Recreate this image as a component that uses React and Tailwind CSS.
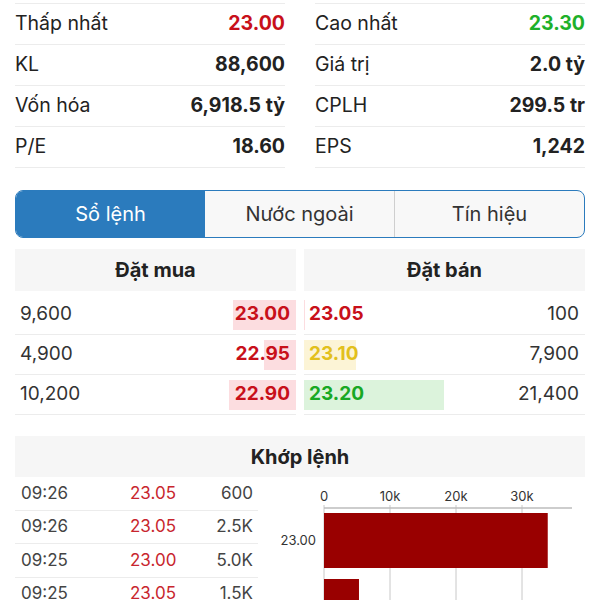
const STATS = [
  [["Thấp nhất", "23.00", "text-[#c8101a]"], ["Cao nhất", "23.30", "text-[#1eb02a]"]],
  [["KL", "88,600", ""], ["Giá trị", "2.0 tỷ", ""]],
  [["Vốn hóa", "6,918.5 tỷ", ""], ["CPLH", "299.5 tr", ""]],
  [["P/E", "18.60", ""], ["EPS", "1,242", ""]],
];

const BUY = [
  { qty: "9,600", vol: 9600, price: "23.00" },
  { qty: "4,900", vol: 4900, price: "22.95" },
  { qty: "10,200", vol: 10200, price: "22.90" },
];

const SELL = [
  { price: "23.05", vol: 100, qty: "100", text: "text-[#c8101a]", bg: "bg-[#fcdde0]" },
  { price: "23.10", vol: 7900, qty: "7,900", text: "text-[#e2c01c]", bg: "bg-[#fcf4d6]" },
  { price: "23.20", vol: 21400, qty: "21,400", text: "text-[#18a824]", bg: "bg-[#dcf3dc]" },
];

const TRADES = [
  ["09:26", "23.05", "600"],
  ["09:26", "23.05", "2.5K"],
  ["09:25", "23.00", "5.0K"],
  ["09:25", "23.05", "1.5K"],
];

const MAXVOL = 21400;
const BARW = 140;

function StatColumn({ col }) {
  return (
    <div className="flex flex-col border-t border-[#ececec]">
      {STATS.map((row) => {
        const [label, value, color] = row[col];
        return (
          <div key={label} className="flex h-[41px] items-center justify-between border-b border-[#ececec]">
            <span className="text-[19.5px] text-[#222]">{label}</span>
            <span className={`text-[19.5px] font-bold ${color || "text-[#222]"}`}>{value}</span>
          </div>
        );
      })}
    </div>
  );
}

function Chart() {
  const x0 = 66, perK = 6.6;
  const ticks = [0, 10, 20, 30];
  return (
    <svg width="327" height="130" viewBox="0 0 327 130" className="block">
      {ticks.map((t) => (
        <g key={t}>
          <text x={x0 + t * perK} y="24" textAnchor="middle" fontSize="13" fill="#333"
            fontFamily="Inter, sans-serif">{t === 0 ? "0" : `${t}k`}</text>
          <line x1={x0 + t * perK} x2={x0 + t * perK} y1="28" y2="130" stroke="#c8c8c8" strokeWidth="1" />
        </g>
      ))}
      <line x1={x0} x2="314" y1="31" y2="31" stroke="#bdbdbd" strokeWidth="1.5" />
      <rect x={x0} y="36" width={33.9 * perK} height="55" fill="#990000" />
      <rect x={x0} y="102" width={5.3 * perK} height="55" fill="#990000" />
      <text x="58" y="68" textAnchor="end" fontSize="13" fill="#333" fontFamily="Inter, sans-serif">23.00</text>
    </svg>
  );
}

export default function App() {
  return (
    <div className="h-[600px] w-[600px] overflow-hidden bg-white px-[15px] pt-[3px] font-['Inter',sans-serif] text-[#222]">
      <div className="grid grid-cols-2 gap-[30px]">
        <StatColumn col={0} />
        <StatColumn col={1} />
      </div>

      <div className="mt-[22px] flex h-[48px] overflow-hidden rounded-[8px] border-[1.5px] border-[#2b7bbd] bg-[#f8f8f8]">
        <div className="flex flex-1 items-center justify-center bg-[#2b7bbd] text-[20px] text-white">Sổ lệnh</div>
        <div className="flex flex-1 items-center justify-center text-[20px] text-[#333]">Nước ngoài</div>
        <div className="flex flex-1 items-center justify-center border-l border-[#cfcfcf] text-[20px] text-[#333]">Tín hiệu</div>
      </div>

      <div className="mt-[11px] grid grid-cols-2 gap-[8px]">
        <div>
          <div className="flex h-[42px] items-center justify-center bg-[#f6f6f6] text-[20px] font-bold">Đặt mua</div>
          <div className="mt-[4px]">
            {BUY.map((r) => (
              <div key={r.price} className="flex h-[40px] items-center justify-between border-b border-[#ececec]">
                <span className="pl-[5px] text-[19px] text-[#333]">{r.qty}</span>
                <div className="relative flex h-[30px] items-center justify-end">
                  <div className="absolute inset-y-0 right-0 bg-[#fcdde0]" style={{ width: (r.vol / MAXVOL) * BARW }} />
                  <span className="relative pr-[6px] text-[19px] font-bold text-[#c8101a]">{r.price}</span>
                </div>
              </div>
            ))}
          </div>
        </div>
        <div>
          <div className="flex h-[42px] items-center justify-center bg-[#f6f6f6] text-[20px] font-bold">Đặt bán</div>
          <div className="mt-[4px]">
            {SELL.map((r) => (
              <div key={r.price} className="flex h-[40px] items-center justify-between border-b border-[#ececec]">
                <div className="relative flex h-[30px] items-center">
                  <div className={`absolute inset-y-0 left-0 ${r.bg}`} style={{ width: (r.vol / MAXVOL) * BARW }} />
                  <span className={`relative pl-[5px] text-[19px] font-bold ${r.text}`}>{r.price}</span>
                </div>
                <span className="pr-[6px] text-[19px] text-[#333]">{r.qty}</span>
              </div>
            ))}
          </div>
        </div>
      </div>

      <div className="mt-[21px] flex h-[41px] items-center justify-center bg-[#f6f6f6] text-[20px] font-bold">Khớp lệnh</div>
      <div className="flex">
        <div className="w-[243px]">
          {TRADES.map(([t, p, v], i) => (
            <div key={i} className="flex h-[33.5px] items-center border-b border-[#ececec] text-[17px]">
              <span className="w-[115px] pl-[6px] text-[#444]">{t}</span>
              <span className="w-[76px] text-[#c8262e]">{p}</span>
              <span className="flex-1 pr-[5px] text-right text-[#444]">{v}</span>
            </div>
          ))}
        </div>
        <Chart />
      </div>
    </div>
  );
}
